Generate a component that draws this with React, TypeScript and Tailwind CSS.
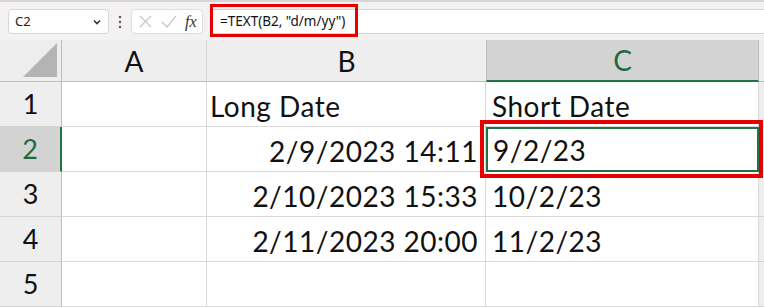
import React from 'react';

const rows = [
  { n: '1', b: 'Long Date', bRight: false, c: 'Short Date' },
  { n: '2', b: '2/9/2023 14:11', bRight: true, c: '9/2/23' },
  { n: '3', b: '2/10/2023 15:33', bRight: true, c: '10/2/23' },
  { n: '4', b: '2/11/2023 20:00', bRight: true, c: '11/2/23' },
  { n: '5', b: '', bRight: true, c: '' },
];

export default function App() {
  return (
    <div className="relative w-[764px] h-[307px] overflow-hidden bg-[#f3f1f1] font-['Lato',sans-serif]">
      {/* Formula bar */}
      <div className="h-[40px] flex items-center border-t-2 border-[#d6d4d4] pt-[1px]">
        <div className="ml-[8px] w-[101px] h-[25px] bg-white border border-[#d8d6d6] rounded-[4px] flex items-center justify-between pl-[6px] pr-[6px] font-['Noto_Sans',sans-serif] text-[13px] text-[#222]">
          <span>C2</span>
          <svg width="10" height="10" viewBox="0 0 10 10">
            <path d="M2 3.5 L5 6.5 L8 3.5" fill="none" stroke="#333" strokeWidth="1.6" />
          </svg>
        </div>
        <div className="w-[22px] flex justify-center">
          <svg width="4" height="14" viewBox="0 0 4 14">
            <circle cx="2" cy="2" r="1.2" fill="#555" />
            <circle cx="2" cy="7" r="1.2" fill="#555" />
            <circle cx="2" cy="12" r="1.2" fill="#555" />
          </svg>
        </div>
        <div className="w-[72px] h-[25px] bg-white border border-[#dedcdc] rounded-[4px] flex items-center gap-[8px] pl-[6px]">
          <svg width="15" height="15" viewBox="0 0 15 15">
            <path d="M2 2 L13 13 M13 2 L2 13" stroke="#c8c8c8" strokeWidth="1.3" />
          </svg>
          <svg width="16" height="15" viewBox="0 0 16 15">
            <path d="M1 8 L6 13 L15 2" fill="none" stroke="#c8c8c8" strokeWidth="1.3" />
          </svg>
          <span className="font-['Liberation_Serif',serif] italic text-[16px] text-[#333] leading-none">fx</span>
        </div>
        <div className="ml-[7px] flex-1 h-[25px] bg-white border-y border-[#d4d2d2] flex items-center pl-[10px] font-['Noto_Sans',sans-serif] text-[13.5px] text-[#111]">
          =TEXT(B2, "d/m/yy")
        </div>
      </div>

      {/* Grid */}
      <div className="grid grid-cols-[62px_145px_279px_273px_1fr] grid-rows-[42px_45px_45px_45px_45px_45px]">
        {/* Header row */}
        <div className="bg-[#efeeee] border-r border-b border-[#bdbdbd] flex items-end justify-end pr-[4px] pb-[4px]">
          <svg width="34" height="34" viewBox="0 0 34 34">
            <path d="M34 0 L34 34 L0 34 Z" fill="#b4b4b4" />
          </svg>
        </div>
        <div className="bg-[#efeeee] border-r border-b border-[#d4d4d4] border-b-[#bdbdbd] flex items-center justify-center text-[28px] text-[#111]">A</div>
        <div className="bg-[#efeeee] border-b border-[#bdbdbd] flex items-center justify-center text-[28px] text-[#111]">B</div>
        <div className="bg-[#d3d3d3] border-l border-r border-[#bdbdbd] border-b-2 border-b-[#217346] flex items-center justify-center text-[28px] text-[#1c6b40]">C</div>
        <div className="bg-[#efeeee] border-b border-[#bdbdbd]"></div>

        {rows.map((r) => {
          const sel = r.n === '2';
          return (
            <React.Fragment key={r.n}>
              <div
                className={`border-b border-b-[#d4d4d4] flex items-center justify-center text-[27px] ${
                  sel
                    ? 'bg-[#d3d3d3] text-[#1c6b40] border-r-2 border-r-[#217346]'
                    : 'bg-[#efeeee] text-[#111] border-r border-r-[#bdbdbd]'
                }`}
              >
                {r.n}
              </div>
              <div className="bg-white border-r border-b border-[#d9d9d9]"></div>
              <div
                className={`bg-white border-r border-b border-[#d9d9d9] flex items-end pb-[3px] text-[28px] tracking-[0.5px] text-[#111] leading-none ${
                  r.bRight ? 'justify-end pr-[7px]' : 'justify-start pl-[3px]'
                }`}
              >
                <span className="leading-[34px]">{r.b}</span>
              </div>
              <div
                className={`bg-white flex items-end pb-[3px] text-[28px] tracking-[0.5px] text-[#111] leading-none ${
                  sel ? 'border-2 border-[#217346] pl-[5px]' : 'border-b border-r border-[#d9d9d9] pl-[6px]'
                }`}
              >
                <span className="leading-[34px]">{r.c}</span>
              </div>
              <div className="bg-[#efeeee] border-b border-[#d4d4d4]"></div>
            </React.Fragment>
          );
        })}
      </div>

      {/* Red highlight boxes */}
      <div className="absolute left-[210px] top-[4px] w-[148px] h-[33px] border-[3px] border-[#e60000] pointer-events-none"></div>
      <div className="absolute left-[480px] top-[120px] w-[283px] h-[58px] border-[4px] border-[#e60000] pointer-events-none"></div>
    </div>
  );
}
